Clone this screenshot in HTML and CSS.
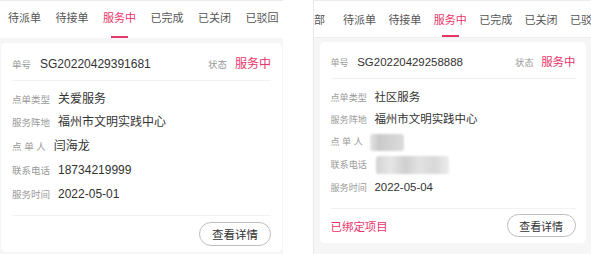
FILE: index.html
```html
<!DOCTYPE html>
<html lang="zh-CN">
<head>
    <meta charset="UTF-8">
    <meta name="viewport" content="width=device-width, initial-scale=1.0">
    <title>服务订单</title>
    <link rel="stylesheet" href="styles.css">
</head>
<body>
    <div class="page">
        <section class="panel panel-a">
            <nav class="tabs tabs-a">
                <span class="tab">待派单</span>
                <span class="tab">待接单</span>
                <span class="tab active">服务中</span>
                <span class="tab">已完成</span>
                <span class="tab">已关闭</span>
                <span class="tab">已驳回</span>
            </nav>
            <div class="list">
                <div class="card">
                    <div class="card-head">
                        <span class="label">单号</span>
                        <span class="order-no">SG20220429391681</span>
                        <span class="label state-label">状态</span>
                        <span class="status">服务中</span>
                    </div>
                    <div class="card-body">
                        <div class="row"><span class="label">点单类型</span><span class="value">关爱服务</span></div>
                        <div class="row"><span class="label">服务阵地</span><span class="value">福州市文明实践中心</span></div>
                        <div class="row"><span class="label">点 单 人</span><span class="value">闫海龙</span></div>
                        <div class="row"><span class="label">联系电话</span><span class="value">18734219999</span></div>
                        <div class="row"><span class="label">服务时间</span><span class="value">2022-05-01</span></div>
                    </div>
                    <div class="card-foot">
                        <button class="btn">查看详情</button>
                    </div>
                </div>
            </div>
        </section>

        <section class="panel panel-b">
            <nav class="tabs tabs-b">
                <span class="tab">全部</span>
                <span class="tab">待派单</span>
                <span class="tab">待接单</span>
                <span class="tab active">服务中</span>
                <span class="tab">已完成</span>
                <span class="tab">已关闭</span>
                <span class="tab">已驳回</span>
            </nav>
            <div class="list">
                <div class="card">
                    <div class="card-head">
                        <span class="label">单号</span>
                        <span class="order-no">SG20220429258888</span>
                        <span class="label state-label">状态</span>
                        <span class="status">服务中</span>
                    </div>
                    <div class="card-body">
                        <div class="row"><span class="label">点单类型</span><span class="value">社区服务</span></div>
                        <div class="row"><span class="label">服务阵地</span><span class="value">福州市文明实践中心</span></div>
                        <div class="row"><span class="label">点 单 人</span><span class="masked masked-name"></span></div>
                        <div class="row"><span class="label">联系电话</span><span class="masked masked-phone"></span></div>
                        <div class="row"><span class="label">服务时间</span><span class="value">2022-05-04</span></div>
                    </div>
                    <div class="card-foot">
                        <span class="bound">已绑定项目</span>
                        <button class="btn">查看详情</button>
                    </div>
                </div>
            </div>
        </section>
    </div>
</body>
</html>
```

FILE: styles.css
```css
body {
    margin: 0;
    font-family: "Liberation Sans", "Noto Sans CJK SC", sans-serif;
    background: #fff;
    color: #333;
}
.page {
    display: flex;
    gap: 30px;
    height: 254px;
    overflow: hidden;
}
.panel {
    display: flex;
    flex-direction: column;
    border-top: 1px solid #ececec;
    background: #f6f6f6;
}
.panel-a {
    width: 283px;
}
.panel-b {
    width: 277px;
    border-left: 1px solid #e8e8e8;
}
.tabs {
    display: flex;
    background: #fff;
    overflow: hidden;
    white-space: nowrap;
}
.tab {
    flex: none;
    display: flex;
    flex-direction: column;
    align-items: center;
    font-size: 11px;
    line-height: 15px;
    color: #555;
}
.tab::after {
    content: "";
    width: 17px;
    height: 2px;
    background: transparent;
}
.tab.active {
    color: #e8346a;
}
.tab.active::after {
    background: #e8346a;
}
.tabs-a {
    padding-left: 0.75px;
}
.tabs-a .tab {
    width: 47.5px;
    padding-top: 10px;
}
.tabs-a .tab::after {
    margin-top: 10px;
}
.tabs-b {
    border-bottom: 1px solid #eee;
}
.tabs-b .tab {
    width: 45.4px;
    padding-top: 11.5px;
}
.tabs-b .tab::after {
    margin-top: 7.5px;
}
.tabs-b .tab:first-child {
    margin-left: -22.6px;
}
.list {
    flex: 1;
    padding: 4.7px 1px 0;
}
.panel-b .list {
    padding: 3.7px 5px 0 6px;
}
.card {
    background: #fff;
    border-radius: 5px;
    padding: 0 11px;
}
.panel-b .card {
    zoom: 0.955;
}
.card-head {
    display: flex;
    align-items: baseline;
    padding: 14px 0 8px;
    line-height: 15px;
    border-bottom: 1px solid #f2f2f2;
}
.label {
    font-size: 9.5px;
    color: #9a9a9a;
}
.order-no {
    font-size: 12px;
    color: #333;
    margin-left: 9px;
}
.state-label {
    margin-left: auto;
}
.status {
    font-size: 12px;
    color: #e8346a;
    margin-left: 8px;
}
.card-body {
    padding: 7px 0 9px;
    border-bottom: 1px solid #f2f2f2;
}
.row {
    display: flex;
    align-items: baseline;
    height: 23.75px;
    line-height: 23.75px;
}
.value {
    font-size: 12px;
    margin-left: 8px;
}
.masked {
    align-self: center;
    display: inline-block;
    height: 18px;
    margin-left: 8px;
    border-radius: 3px;
    filter: blur(1.2px);
}
.masked-name {
    width: 35px;
    background: linear-gradient(90deg, #e6e6e6, #c9c9c9 25%, #d2d2d2 60%, #dcdcdc);
}
.masked-phone {
    width: 76px;
    margin-left: 10px;
    background: linear-gradient(90deg, #d4d4d4, #e6e6e6 20%, #cfcfcf 40%, #e2e2e2 60%, #d8d8d8 80%, #ececec);
}
.card-foot {
    display: flex;
    justify-content: flex-end;
    align-items: center;
    padding: 6px 0;
}
.bound {
    margin-right: auto;
    color: #e8346a;
    font-size: 12px;
}
.btn {
    width: 72px;
    height: 24px;
    padding: 0;
    border: 1px solid #bdbdbd;
    border-radius: 12px;
    background: #fff;
    font-family: inherit;
    font-size: 11.5px;
    color: #333;
}
```
